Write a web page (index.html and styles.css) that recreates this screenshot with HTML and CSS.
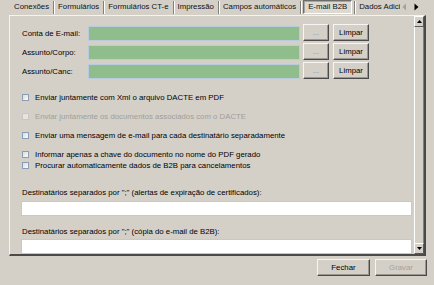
FILE: index.html
```html
<!DOCTYPE html>
<html lang="pt">
<head>
<meta charset="utf-8">
<link rel="stylesheet" href="styles.css">
</head>
<body>
<div class="tabs">
  <span class="tab">Conexões</span><i class="sep"></i>
  <span class="tab">Formulários</span><i class="sep"></i>
  <span class="tab">Formulários CT-e</span><i class="sep"></i>
  <span class="tab">Impressão</span><i class="sep"></i>
  <span class="tab">Campos automáticos</span><i class="sep"></i>
  <span class="tab active">E-mail B2B</span><i class="sep"></i>
  <span class="tab last">Dados Adici</span>
  <span class="tab-nav">
    <svg width="5" height="8" viewBox="0 0 5 8"><path d="M4 0.5 L0.5 4 L4 7.5 Z" fill="#a4a19b"/></svg>
    <svg width="5" height="8" viewBox="0 0 5 8"><path d="M0.5 0.5 L4.5 4 L0.5 7.5 Z" fill="#000"/></svg>
  </span>
</div>

<div class="panel">
  <div class="content">
    <div class="fields">
      <div class="row">
        <span class="lbl">Conta de E-mail:</span>
        <span class="input green"></span>
        <button class="btn dots">...</button>
        <button class="btn clear">Limpar</button>
      </div>
      <div class="row">
        <span class="lbl">Assunto/Corpo:</span>
        <span class="input green"></span>
        <button class="btn dots">...</button>
        <button class="btn clear">Limpar</button>
      </div>
      <div class="row">
        <span class="lbl">Assunto/Canc:</span>
        <span class="input green"></span>
        <button class="btn dots">...</button>
        <button class="btn clear">Limpar</button>
      </div>
    </div>

    <div class="checks">
      <div class="check"><span class="box"></span>Enviar juntamente com Xml o arquivo DACTE em PDF</div>
      <div class="check disabled spaced"><span class="box"></span>Enviar juntamente os documentos associados com o DACTE</div>
      <div class="check spaced"><span class="box"></span>Enviar uma mensagem de e-mail para cada destinatário separadamente</div>
      <div class="check spaced"><span class="box"></span>Informar apenas a chave do documento no nome do PDF gerado</div>
      <div class="check"><span class="box"></span>Procurar automaticamente dados de B2B para cancelamentos</div>
    </div>

    <div class="dest first">Destinatários separados por ";" (alertas de expiração de certificados):</div>
    <span class="input wide first-input"></span>
    <div class="dest second">Destinatários separados por ";" (cópia do e-mail de B2B):</div>
    <span class="input wide second-input"></span>
  </div>

  <div class="scrollbar">
    <span class="sb-btn">
      <svg width="5" height="3" viewBox="0 0 5 3"><path d="M2.5 0 L5 3 L0 3 Z" fill="#000"/></svg>
    </span>
    <span class="sb-thumb"></span>
    <span class="sb-btn">
      <svg width="5" height="3" viewBox="0 0 5 3"><path d="M0 0 L5 0 L2.5 3 Z" fill="#000"/></svg>
    </span>
  </div>
</div>

<div class="footer">
  <button class="btn big">Fechar</button>
  <button class="btn big off">Gravar</button>
</div>
</body>
</html>
```

FILE: styles.css
```css
html, body {
  margin: 0;
  padding: 0;
}

body {
  width: 434px;
  height: 285px;
  overflow: hidden;
  background: #d4d0c8;
  font-family: "Liberation Sans", Arial, sans-serif;
  font-size: 7.8px;
  color: #000;
}

/* ---------- tab strip ---------- */
.tabs {
  display: flex;
  align-items: flex-start;
  height: 15px;
  padding-left: 11px;
  padding-right: 10px;
  white-space: nowrap;
  overflow: hidden;
}

.tab {
  flex-shrink: 0;
  padding: 0 4px 0 3px;
  height: 14px;
  line-height: 14px;
  color: #111;
}

.tab.last {
  flex-shrink: 1;
  min-width: 0;
  overflow: hidden;
  padding-right: 0;
}

.tab.active {
  box-sizing: border-box;
  height: 14px;
  line-height: 12px;
  padding: 0 4px;
  margin: 0 2px 0 1px;
  border: 1px solid;
  border-color: #6e6c68 #fff #fff #6e6c68;
  box-shadow: inset 1px 1px 0 #a9a6a0;
  background: #dcd9d3;
}

.sep {
  display: block;
  flex-shrink: 0;
  width: 1px;
  height: 13px;
  margin: 1px 1px 0 0;
  background: #808080;
  box-shadow: 1px 0 0 #fff;
}

.tab-nav {
  display: flex;
  flex-shrink: 0;
  align-items: center;
  gap: 7px;
  height: 14px;
  margin-left: 2px;
}

/* ---------- panel ---------- */
.panel {
  display: flex;
  box-sizing: border-box;
  margin-left: 9px;
  width: 417px;
  height: 241px;
  border-top: 1px solid #f4f3f0;
  border-left: 1px solid #f4f3f0;
  border-right: 2px solid #4a4a4a;
  border-bottom: 2px solid #4a4a4a;
}

.content {
  flex: 1;
  overflow: hidden;
  padding: 8px 0 0 12px;
}

.fields {
  display: flex;
  flex-direction: column;
  gap: 2px;
}

.row {
  display: flex;
  align-items: flex-end;
  height: 17px;
}

.lbl {
  width: 66px;
  line-height: 15px;
  color: #000;
}

.input {
  display: block;
  box-sizing: border-box;
  height: 15px;
  border: 1px solid #b9cbdc;
  background: #fff;
}

.input.green {
  width: 212px;
  background: #8fbe8c;
}

.btn {
  box-sizing: border-box;
  height: 17px;
  padding: 0;
  font: inherit;
  color: #000;
  background: #d4d0c8;
  border: 1px solid;
  border-color: #f6f5f2 #4a4a4a #4a4a4a #f6f5f2;
  box-shadow: inset -1px -1px 0 #9a9792;
}

.btn.dots {
  width: 26px;
  margin-left: 3px;
  color: #8e8b86;
}

.btn.clear {
  width: 36px;
  margin-left: 4px;
}

/* ---------- checkboxes ---------- */
.checks {
  margin-top: 13px;
}

.check {
  display: flex;
  align-items: center;
  height: 11px;
  color: #000;
}

.check.spaced {
  margin-top: 8px;
}

.box {
  box-sizing: border-box;
  width: 7px;
  height: 7px;
  margin-right: 6px;
  border: 1px solid #8c9eb3;
  background: linear-gradient(135deg, #dcdcd8, #fbfbfa);
}

.check.disabled {
  color: #a19e99;
}

.check.disabled .box {
  border-color: #c9c7c2;
  background: #e6e4e0;
}

/* ---------- recipients ---------- */
.dest {
  height: 11px;
  line-height: 11px;
  color: #000;
}

.dest.first {
  margin-top: 16px;
}

.dest.second {
  margin-top: 10px;
}

.input.wide {
  width: 391px;
  margin-left: -1px;
}

.first-input {
  margin-top: 3px;
}

.second-input {
  margin-top: 2px;
}

/* ---------- scrollbar ---------- */
.scrollbar {
  display: flex;
  flex-direction: column;
  width: 10px;
}

.sb-btn {
  display: flex;
  align-items: center;
  justify-content: center;
  box-sizing: border-box;
  height: 11px;
  background: #d4d0c8;
  border: 1px solid;
  border-color: #fff #5a5a5a #5a5a5a #fff;
}

.sb-thumb {
  flex: 1;
  box-sizing: border-box;
  border-left: 1px solid #fff;
  border-right: 1px solid #808080;
  background: #d4d0c8;
}

/* ---------- footer ---------- */
.footer {
  display: flex;
  justify-content: flex-end;
  gap: 5px;
  padding: 3px 7px 0 0;
}

.btn.big {
  width: 53px;
}

.btn.big.off {
  width: 52px;
  color: #a4a19b;
}
```
